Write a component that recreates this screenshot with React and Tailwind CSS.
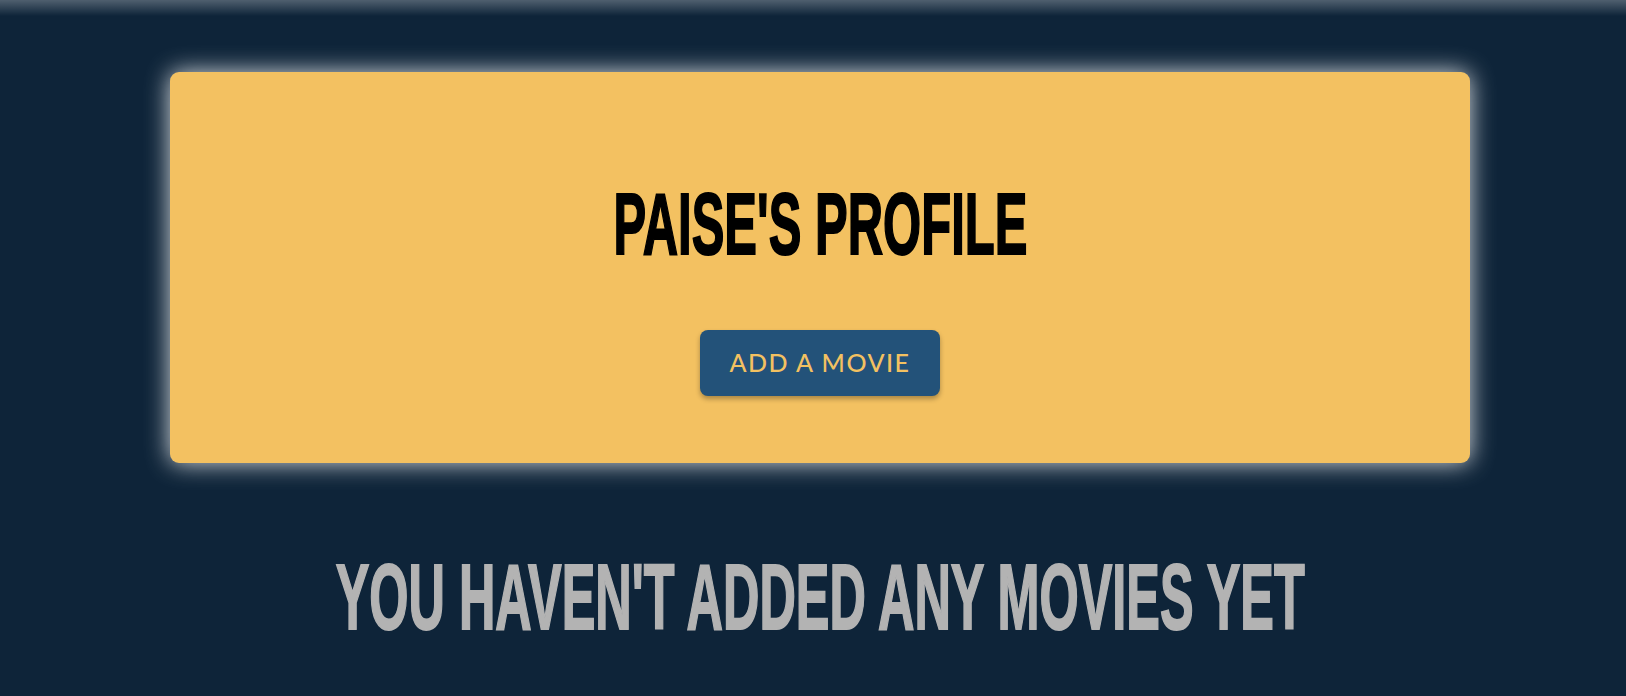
export default function App() {
  return (
    <div className="min-h-screen bg-[#0e2439] flex flex-col" style={{ minHeight: 696 }}>
      <div className="w-full h-[16px] bg-gradient-to-b from-[rgba(255,255,255,0.27)] to-transparent" />
      <div className="flex flex-col items-center pl-[14px]">
        <div className="w-[1300px] mt-[56px] rounded-[9px] bg-[#f3c161] shadow-[0_0_24px_rgba(255,255,255,0.85)] flex flex-col items-center pt-[108px] pb-[67px]">
          <h1 className="text-[88px] leading-none font-bold text-black font-['Liberation_Sans',sans-serif] inline-block scale-x-[0.557] whitespace-nowrap [-webkit-text-stroke:2px_black]">
            PAISE'S PROFILE
          </h1>
          <button className="mt-[62px] w-[240px] h-[66px] rounded-[8px] bg-[#235279] text-[#f3c161] text-[25px] tracking-[1.5px] font-['Lato',sans-serif] font-medium shadow-[0_3px_5px_rgba(0,0,0,0.3)]">
            ADD A MOVIE
          </button>
        </div>
        <h2 className="mt-[88px] text-[92px] leading-none font-bold text-[#b3b3b3] font-['Liberation_Sans',sans-serif] inline-block scale-x-[0.548] whitespace-nowrap [-webkit-text-stroke:2px_#b3b3b3]">
          YOU HAVEN'T ADDED ANY MOVIES YET
        </h2>
      </div>
    </div>
  );
}
